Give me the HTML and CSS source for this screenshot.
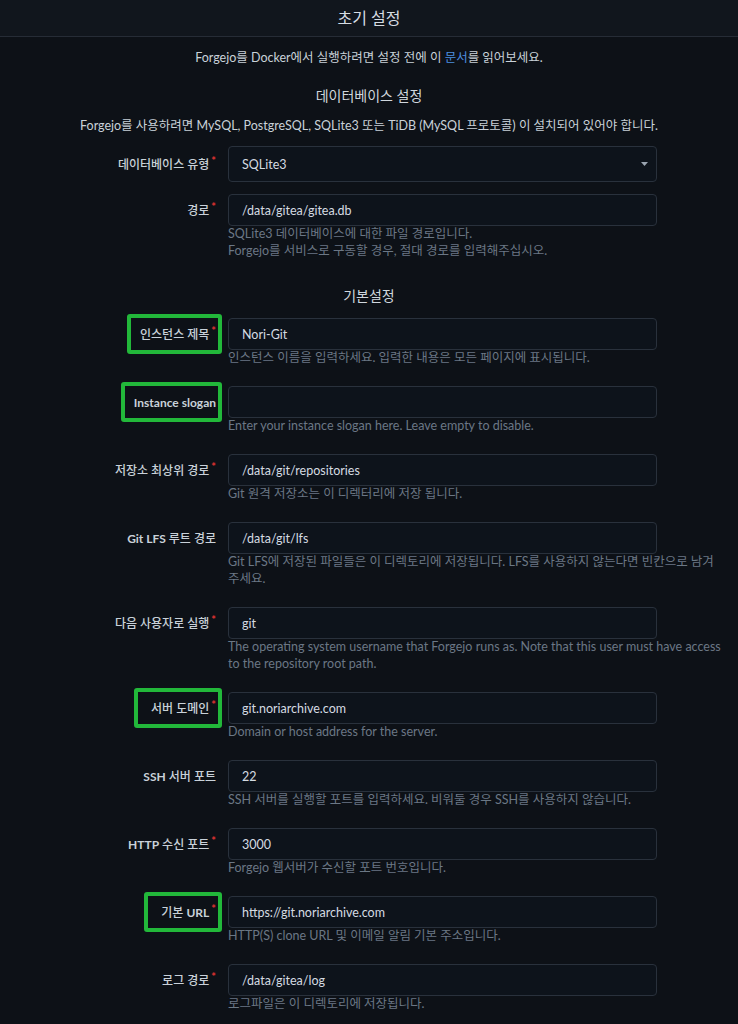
FILE: index.html
```html
<!DOCTYPE html>
<html lang="ko">
<head>
<meta charset="utf-8">
<title>초기 설정</title>
<link rel="stylesheet" href="styles.css">
</head>
<body>
<header class="page-head"><h1>초기 설정</h1></header>
<main class="install">
  <p class="intro">Forgejo를 Docker에서 실행하려면 설정 전에 이 <a href="#" class="link">문서</a>를 읽어보세요.</p>
  <h2 class="section-title">데이터베이스 설정</h2>
  <p class="desc">Forgejo를 사용하려면 MySQL, PostgreSQL, SQLite3 또는 TiDB (MySQL 프로토콜) 이 설치되어 있어야 합니다.</p>

  <div class="field field-select">
    <label class="field-label"><span class="label-text required">데이터베이스 유형</span></label>
    <div class="input select"><span>SQLite3</span><svg class="caret" width="7" height="4" viewBox="0 0 7 4"><path d="M0 0h7L3.5 4z" fill="#9aa4b0"/></svg></div>
  </div>

  <div class="field">
    <label class="field-label"><span class="label-text required">경로</span></label>
    <input class="input" value="/data/gitea/gitea.db">
    <div class="help">SQLite3 데이터베이스에 대한 파일 경로입니다.<br>Forgejo를 서비스로 구동할 경우, 절대 경로를 입력해주십시오.</div>
  </div>

  <h2 class="section-title section-basic">기본설정</h2>

  <div class="field">
    <label class="field-label"><span class="label-text required hl">인스턴스 제목</span></label>
    <input class="input" value="Nori-Git">
    <div class="help">인스턴스 이름을 입력하세요. 입력한 내용은 모든 페이지에 표시됩니다.</div>
  </div>

  <div class="field">
    <label class="field-label"><span class="label-text hl"><span class="lat">Instance slogan</span></span></label>
    <input class="input" value="">
    <div class="help">Enter your instance slogan here. Leave empty to disable.</div>
  </div>

  <div class="field">
    <label class="field-label"><span class="label-text required">저장소 최상위 경로</span></label>
    <input class="input" value="/data/git/repositories">
    <div class="help">Git 원격 저장소는 이 디렉터리에 저장 됩니다.</div>
  </div>

  <div class="field">
    <label class="field-label"><span class="label-text"><span class="lat">Git LFS</span> 루트 경로</span></label>
    <input class="input" value="/data/git/lfs">
    <div class="help">Git LFS에 저장된 파일들은 이 디렉토리에 저장됩니다. LFS를 사용하지 않는다면 빈칸으로 남겨주세요.</div>
  </div>

  <div class="field">
    <label class="field-label"><span class="label-text required">다음 사용자로 실행</span></label>
    <input class="input" value="git">
    <div class="help">The operating system username that Forgejo runs as. Note that this user must have access to the repository root path.</div>
  </div>

  <div class="field">
    <label class="field-label"><span class="label-text required hl hl-wide">서버 도메인</span></label>
    <input class="input" value="git.noriarchive.com">
    <div class="help">Domain or host address for the server.</div>
  </div>

  <div class="field">
    <label class="field-label"><span class="label-text"><span class="lat">SSH</span> 서버 포트</span></label>
    <input class="input" value="22">
    <div class="help">SSH 서버를 실행할 포트를 입력하세요. 비워둘 경우 SSH를 사용하지 않습니다.</div>
  </div>

  <div class="field">
    <label class="field-label"><span class="label-text required"><span class="lat">HTTP</span> 수신 포트</span></label>
    <input class="input" value="3000">
    <div class="help">Forgejo 웹서버가 수신할 포트 번호입니다.</div>
  </div>

  <div class="field">
    <label class="field-label"><span class="label-text required hl hl-wide">기본 <span class="lat">URL</span></span></label>
    <input class="input" value="https://git.noriarchive.com">
    <div class="help">HTTP(S) clone URL 및 이메일 알림 기본 주소입니다.</div>
  </div>

  <div class="field">
    <label class="field-label"><span class="label-text required">로그 경로</span></label>
    <input class="input" value="/data/gitea/log">
    <div class="help">로그파일은 이 디렉토리에 저장됩니다.</div>
  </div>
</main>
</body>
</html>
```

FILE: styles.css
```css
html, body {
  margin: 0;
  background: #0d1117;
}

body {
  color: #c9d1d9;
  font-family: "Lato", "Noto Sans CJK KR", sans-serif;
  font-size: 12.5px;
}

.page-head {
  height: 36px;
  border-bottom: 1px solid #262c36;
  background: #11161d;
  display: flex;
  align-items: center;
  justify-content: center;
}

.page-head h1 {
  margin: 0;
  font-size: 16px;
  font-weight: 400;
  line-height: 20px;
  color: #d6dce3;
}

.install {
  padding-top: 12px;
}

.intro {
  margin: 0;
  text-align: center;
  line-height: 17px;
}

.link {
  color: #4c8fe0;
  text-decoration: none;
}

.section-title {
  margin: 21px 0 12px;
  font-size: 14px;
  font-weight: 400;
  line-height: 18px;
  text-align: center;
  color: #d0d7de;
}

.section-basic {
  margin: 27px 0 13px;
}

.desc {
  margin: 0 0 12px;
  text-align: center;
  line-height: 17px;
}

.field {
  display: grid;
  grid-template-columns: 216px 495px;
  column-gap: 12px;
  margin-bottom: 19px;
}

.field-select {
  margin-bottom: 12px;
}

.field-label {
  grid-column: 1;
  grid-row: 1;
  height: 32px;
  display: flex;
  align-items: center;
  justify-content: flex-end;
  font-size: 12px;
  font-weight: 500;
  color: #c9d1d9;
}

.field-select .field-label {
  height: 36px;
}

.label-text {
  position: relative;
  line-height: 17px;
}

.lat {
  font-weight: 700;
}

.required::after {
  content: "*";
  color: #e03131;
  font-size: 11px;
  font-weight: 700;
  margin-left: 2px;
  vertical-align: 4px;
  line-height: 0;
}

.hl::before {
  content: "";
  position: absolute;
  left: -13px;
  right: -6px;
  top: -12px;
  bottom: -11px;
  border: 4px solid #22b83a;
  border-radius: 3px;
}

.hl-wide::before {
  left: -17px;
}

.input {
  grid-column: 2;
  grid-row: 1;
  width: 429px;
  height: 32px;
  box-sizing: border-box;
  margin: 0;
  border: 1px solid #29313c;
  border-radius: 4px;
  background: #0d131b;
  padding: 0 13px;
  color: #d5dbe2;
  font: inherit;
  outline: none;
}

.select {
  height: 36px;
  display: flex;
  align-items: center;
  justify-content: space-between;
  padding-right: 8px;
}

.caret {
  display: block;
}

.help {
  grid-column: 2;
  grid-row: 2;
  margin-top: -1px;
  margin-bottom: 1px;
  line-height: 17px;
  color: #6b7785;
}
```
